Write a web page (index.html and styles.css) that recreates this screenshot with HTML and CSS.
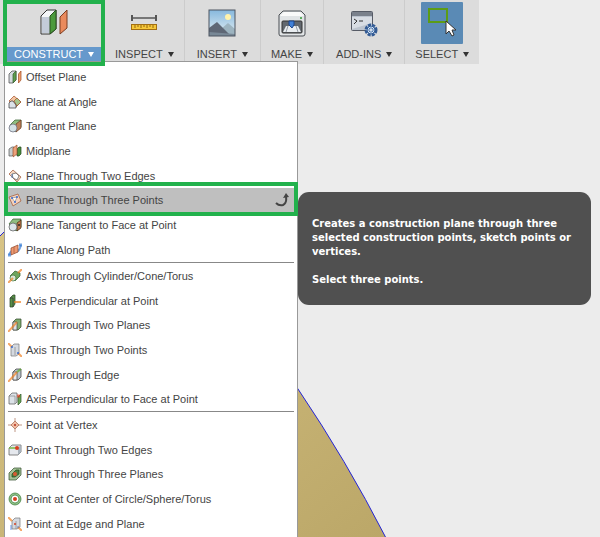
FILE: index.html
```html
<!DOCTYPE html>
<html lang="en">
<head>
    <meta charset="UTF-8">
    <meta name="viewport" content="width=device-width, initial-scale=1.0">
    <title>Construct menu</title>
    <link rel="stylesheet" href="styles.css">
</head>
<body>

    <!-- Model canvas behind the panels -->
    <svg class="model" width="400" height="537" viewBox="0 0 400 537">
        <defs>
            <linearGradient id="sand" x1="0" y1="0" x2="1" y2="1">
                <stop offset="0" stop-color="#d8c486"/>
                <stop offset="1" stop-color="#bba768"/>
            </linearGradient>
        </defs>
        <path d="M-2 238L4 232Q150 170 298 389Q346 460 386 538H-2Z" fill="url(#sand)" stroke="#2424d8"/>
    </svg>

    <!-- Toolbar -->
    <nav class="toolbar">
        <div class="group marked">
            <button type="button" class="tool active">
                <span class="picture">
                    <svg width="28" height="28" viewBox="0 0 28 28">
                        <path d="M1 7L7 1H16V20L10 25H1Z" fill="#f4f6f8" stroke="#333"/>
                        <path d="M2 8H10V24H2Z" fill="#c3cbd8"/>
                        <path d="M10 7L16 1V20L10 25Z" fill="#4c9a3c" stroke="#28501f"/>
                        <path d="M20 8L27 1V19L20 25Z" fill="#ea8a5c" stroke="#7c3c20"/>
                    </svg>
                </span>
                <span class="caption">CONSTRUCT<i class="arrow"></i></span>
            </button>

            <!-- Dropdown -->
            <div class="menu">
                <ul>
                    <li><button type="button"><svg viewBox="0 0 14 14"><path d="M1 4L4 1H8V10L5 13H1Z" fill="#d5dbe0" stroke="#444"/><path d="M5 4L8 1V10L5 13Z" fill="#5e9d4f" stroke="#345c2c"/><path d="M10.500 4L13 1V10L10.500 13Z" fill="#f2a070" stroke="#a04a20"/></svg>Offset Plane</button></li>
                    <li><button type="button"><svg viewBox="0 0 14 14"><path d="M1 6L6 1L13 7L8 12Z" fill="#f4c5a2" stroke="#a35029"/><path d="M6 6L9 3L13 7L9 11Z" fill="#a5c58c" stroke="#a35029"/><path d="M1 8L3 6H5L8 10V13H1Z" fill="#dce2e8" stroke="#333"/></svg>Plane at Angle</button></li>
                    <li><button type="button"><svg viewBox="0 0 14 14"><path d="M2 6L7 1H13V8L7 13Z" fill="#8fbd80" stroke="#315b2a"/><path d="M8 5L13 1V9L8 13Z" fill="#bd825b" stroke="#673b20"/><circle cx="5" cy="9" r="4" fill="#d4e1e6" stroke="#667"/></svg>Tangent Plane</button></li>
                    <li><button type="button"><svg viewBox="0 0 14 14"><path d="M1 5L4 3H6V10L4 12H1Z" fill="#c8ced0" stroke="#555"/><path d="M9 5L11 3H13V10L11 12H9Z" fill="#4b913e" stroke="#24431d"/><path d="M5 4L9 1V10L5 13Z" fill="#eda17a" stroke="#98502c"/></svg>Midplane</button></li>
                    <li><button type="button"><svg viewBox="0 0 14 14"><path d="M1 5L5 1L13 8L9 13Z" fill="#f6d8c3" stroke="#9c5634"/><path d="M4 5L8 4L11 7L9 11L5 9Z" fill="#fff" stroke="#555"/><path d="M4 5V9" stroke="#3375d0"/></svg>Plane Through Two Edges</button></li>
                    <li class="hover"><button type="button"><svg viewBox="0 0 14 14"><path d="M1 4L10 1L13 8L5 13Z" fill="#f4d2bd" stroke="#9c5634"/><path d="M4 5L9 4L7 9Z" fill="#fff" stroke="#888"/><path d="M3 5h2M8 4h2M6 9h2" stroke="#2867d8" stroke-width="2"/></svg>Plane Through Three Points<svg class="turn" viewBox="0 0 14 14"><path d="M1 10Q4 13 8 12Q12 10 11 4" fill="none" stroke="#444" stroke-width="2"/><path d="M8 5L11 0L14 4Z" fill="#444"/></svg></button></li>
                    <li><button type="button"><svg viewBox="0 0 14 14"><path d="M1 6L5 1H13V9L8 13Z" fill="#8fbd80" stroke="#315b2a"/><path d="M9 5L13 2V10L9 13Z" fill="#c27b4f" stroke="#40270f"/><circle cx="5" cy="9" r="4" fill="#dce5ea" stroke="#555"/><path d="M10 7h2" stroke="#222" stroke-width="2"/></svg>Plane Tangent to Face at Point</button></li>
                    <li><button type="button"><svg viewBox="0 0 14 14"><path d="M1 12Q3 6 7 8T13 2" fill="none" stroke="#397ed4" stroke-width="2"/><path d="M3 5L10 2V9L3 12Z" fill="#ed9a73" stroke="#8d4428"/><path d="M6 4V10" stroke="#a35230"/><path d="M0 12h3M11 2h3" stroke="#397ed4" stroke-width="3"/></svg>Plane Along Path</button></li>
                </ul>
                <ul>
                    <li><button type="button"><svg viewBox="0 0 14 14"><path d="M2 7L7 2L12 4V7L7 12Z" fill="#6ea65e" stroke="#315b2a"/><circle cx="5" cy="9" r="3" fill="#dbe7d8" stroke="#3e7434"/><path d="M0 14L5 9M10 4L14 0" stroke="#f08024" stroke-width="2"/></svg>Axis Through Cylinder/Cone/Torus</button></li>
                    <li><button type="button"><svg viewBox="0 0 14 14"><path d="M2 4L5 1H7V10L5 13H2Z" fill="#578f48" stroke="#2c4227"/><path d="M2 4H5V13" fill="none" stroke="#333"/><path d="M6 8H13" stroke="#f08024" stroke-width="2"/></svg>Axis Perpendicular at Point</button></li>
                    <li><button type="button"><svg viewBox="0 0 14 14"><path d="M5 4L8 1H13V9L10 12H5Z" fill="#7fad70" stroke="#2c4227"/><path d="M5 4H9V12H5Z" fill="#dce2e8" stroke="#444"/><path d="M0 14L9 4" stroke="#f08024" stroke-width="2"/></svg>Axis Through Two Planes</button></li>
                    <li><button type="button"><svg viewBox="0 0 14 14"><path d="M3 4L6 1H11V11L8 13H3Z" fill="#d4d9e0" stroke="#777"/><path d="M7 4V12" stroke="#888"/><path d="M0 0L4 4M10 10L14 14" stroke="#f08024" stroke-width="2"/><path d="M3 4h2M9 10h2" stroke="#2867d8" stroke-width="2"/></svg>Axis Through Two Points</button></li>
                    <li><button type="button"><svg viewBox="0 0 14 14"><path d="M5 4L8 1H13V9L10 12H5Z" fill="#b9c3cc" stroke="#333"/><path d="M5 4H9V12H5Z" fill="#e6eaee" stroke="#444"/><path d="M9 4L13 1" stroke="#5eae2c" stroke-width="2"/><path d="M0 14L9 4" stroke="#f08024" stroke-width="2"/></svg>Axis Through Edge</button></li>
                    <li><button type="button"><svg viewBox="0 0 14 14"><path d="M1 4L4 1H9V10L7 12H1Z" fill="#dce2e8" stroke="#555"/><path d="M1 4H7V12" fill="none" stroke="#888"/><path d="M10 5L13 2V10L10 13Z" fill="#69a657" stroke="#31572a"/><path d="M9 4h3" stroke="#d83f20" stroke-width="3"/></svg>Axis Perpendicular to Face at Point</button></li>
                </ul>
                <ul>
                    <li><button type="button"><svg viewBox="0 0 14 14"><path d="M7 0V14M0 7H14" stroke="#a76c52"/><path d="M7 3L11 7L7 11L3 7Z" fill="#f0bda4" stroke="#a76c52"/><circle cx="7" cy="7" r="1" fill="#b3311c"/></svg>Point at Vertex</button></li>
                    <li><button type="button"><svg viewBox="0 0 14 14"><path d="M1 5L4 2H13V9L10 12H1Z" fill="#e5e8ed" stroke="#555"/><path d="M10 5L13 2V9L10 12Z" fill="#a8b2bc"/><path d="M1 5H9" stroke="#6fb536" stroke-width="2"/><circle cx="9" cy="5" r="2" fill="#d83f20"/></svg>Point Through Two Edges</button></li>
                    <li><button type="button"><svg viewBox="0 0 14 14"><path d="M1 6L6 1H13V8L8 13H1Z" fill="#a3c297" stroke="#344d2e"/><path d="M4 7L8 3H11V7L7 10H4Z" fill="#4b7f3e" stroke="#254a20"/><circle cx="7" cy="7" r="2" fill="#d85a32"/></svg>Point Through Three Planes</button></li>
                    <li><button type="button"><svg viewBox="0 0 14 14"><circle cx="7" cy="7" r="6" fill="#8fc087" stroke="#397a37"/><circle cx="7" cy="7" r="4" fill="#fff" stroke="#397a37"/><circle cx="7" cy="7" r="2" fill="#d83f20"/></svg>Point at Center of Circle/Sphere/Torus</button></li>
                    <li><button type="button"><svg viewBox="0 0 14 14"><path d="M4 4L7 1H12V10L9 12H4Z" fill="#d4d9e0" stroke="#777"/><path d="M8 4V12" stroke="#888"/><path d="M0 0L4 4M10 10L14 14" stroke="#f08024" stroke-width="2"/><path d="M3 13V8M9 10h2" stroke="#2867d8"/><circle cx="7" cy="7" r="1" fill="#d83f20"/></svg>Point at Edge and Plane</button></li>
                </ul>

                <div class="tooltip" role="tooltip">
                    <p>Creates a construction plane through three selected construction points, sketch points or vertices.</p>
                    <p>Select three points.</p>
                </div>
            </div>
        </div>

        <div class="group">
            <button type="button" class="tool">
                <span class="picture">
                    <svg width="28" height="28" viewBox="0 0 28 28">
                        <path d="M2 9H26" stroke="#777" stroke-width="2"/>
                        <path d="M2 6V12M26 6V12" stroke="#555" stroke-width="2"/>
                        <rect x="1.500" y="15.500" width="25" height="5" fill="#f6c83a" stroke="#a36f12"/>
                        <path d="M5 16v3M8 16v2M11 16v3M14 16v2M17 16v3M20 16v2M23 16v3" stroke="#94660f"/>
                    </svg>
                </span>
                <span class="caption">INSPECT<i class="arrow"></i></span>
            </button>
        </div>

        <div class="group">
            <button type="button" class="tool">
                <span class="picture">
                    <svg width="28" height="28" viewBox="0 0 28 28">
                        <defs>
                            <linearGradient id="sky" x1="0" y1="0" x2="0" y2="1">
                                <stop offset="0" stop-color="#86b8dd"/>
                                <stop offset="1" stop-color="#e6f0f4"/>
                            </linearGradient>
                        </defs>
                        <rect x="1" y="1" width="26" height="26" fill="url(#sky)"/>
                        <path d="M13 20L20 14L27 20V27H13Z" fill="#9db4c0"/>
                        <path d="M1 19L9 13L22 26H1Z" fill="#5e6775"/>
                        <path d="M1 23L27 25V27H1Z" fill="#788896"/>
                        <circle cx="20" cy="8" r="3" fill="#fff3ab"/>
                        <rect x="1" y="1" width="26" height="26" fill="none" stroke="#4c5560"/>
                    </svg>
                </span>
                <span class="caption">INSERT<i class="arrow"></i></span>
            </button>
        </div>

        <div class="group">
            <button type="button" class="tool">
                <span class="picture">
                    <svg width="28" height="28" viewBox="0 0 28 28">
                        <path d="M1 6L5 2H23L27 6V25Q27 27 25 27H3Q1 27 1 25Z" fill="#e1e4e6" stroke="#4b4f54"/>
                        <path d="M2 7L6 3H22L26 7Z" fill="#fafafa"/>
                        <rect x="4" y="12" width="20" height="12" rx="1" fill="#62686f" stroke="#333"/>
                        <path d="M8 17H20L23 23H5Z" fill="#e9edf0"/>
                        <path d="M10 17L8 23M18 17L20 23" stroke="#969da5"/>
                        <path d="M11 12H16V16L14 19L11 16Z" fill="#4181d8" stroke="#1d478c"/>
                        <circle cx="23" cy="9" r="1" fill="#2f9c32"/>
                    </svg>
                </span>
                <span class="caption">MAKE<i class="arrow"></i></span>
            </button>
        </div>

        <div class="group">
            <button type="button" class="tool">
                <span class="picture">
                    <svg width="28" height="28" viewBox="0 0 28 28">
                        <rect x="1.500" y="2.500" width="21" height="19" rx="1" fill="#bcc4cf" stroke="#565b66"/>
                        <rect x="2" y="3" width="20" height="4" fill="#7a818c"/>
                        <path d="M2 8H22V14L2 20Z" fill="#d8dde4"/>
                        <path d="M4 10L7 12L4 15M9 12H13" fill="none" stroke="#333"/>
                        <circle cx="21" cy="21" r="5" fill="#dae7f5" stroke="#325a94" stroke-width="3" stroke-dasharray="3 1"/>
                        <circle cx="21" cy="21" r="4" fill="#dae7f5" stroke="#325a94"/>
                        <path d="M21 17V25M17 21H25M18 18L24 24M24 18L18 24" stroke="#4d76ac"/>
                        <circle cx="21" cy="21" r="1" fill="#fff"/>
                    </svg>
                </span>
                <span class="caption">ADD-INS<i class="arrow"></i></span>
            </button>
        </div>

        <div class="group">
            <button type="button" class="tool">
                <span class="picture selected">
                    <svg width="42" height="42" viewBox="0 0 42 42">
                        <rect x="8" y="7" width="18" height="13" fill="none" stroke="#5c9c16" stroke-width="2"/>
                        <path d="M25 19V32L28 29L31 34L33 33L31 28H35Z" fill="#fff" stroke="#333"/>
                    </svg>
                </span>
                <span class="caption">SELECT<i class="arrow"></i></span>
            </button>
        </div>
    </nav>

</body>
</html>
```
FILE: styles.css
```css
body {
    margin: 0;
    min-height: 100vh;
    overflow: hidden;
    background-color: #ececec;
    font-family: "Liberation Sans", Arial, sans-serif;
    font-size: 11px;
    color: #444;
}

.model {
    position: absolute;
    top: 0;
    left: 0;
}

button {
    border: none;
    background: none;
    font: inherit;
    color: inherit;
    cursor: pointer;
}

/* Toolbar */
.toolbar {
    position: relative;
    display: flex;
    width: max-content;
    height: 64px;
    padding-left: 7px;
    background-color: #dcdcdc;
}

.group {
    position: relative;
    padding: 2px 0;
}

.group + .group {
    border-right: 1px solid #ccc;
}

.group:last-child {
    border-right: none;
}

.marked {
    margin-right: 4px;
    z-index: 1;
}

.marked::after {
    content: "";
    position: absolute;
    inset: 0 -4px -2px;
    border: 4px solid #22b14c;
    pointer-events: none;
}

.tool {
    display: flex;
    flex-direction: column;
    align-items: center;
    padding: 0;
}

.picture {
    display: flex;
    align-items: center;
    justify-content: center;
    width: 42px;
    height: 42px;
}

.selected {
    background-color: #5a8ab5;
    border-radius: 1px;
}

.caption {
    display: flex;
    align-items: center;
    gap: 5px;
    margin-top: 3px;
    padding: 0 12px;
    line-height: 15px;
}

.group:nth-child(even) .caption {
    padding: 0 10px;
}

.active .caption {
    padding: 0 7px;
    background-color: #6699cc;
    color: #fff;
}

.arrow {
    border: 3px solid transparent;
    border-top: 5px solid #333;
    border-bottom: none;
}

.active .arrow {
    border-top-color: #fff;
}

/* Dropdown */
.menu {
    position: absolute;
    top: 61px;
    left: -3px;
    width: 286px;
    padding: 2px 3px;
    border: 1px solid #999;
    background-color: #fff;
}

.menu ul {
    margin: 0;
    padding: 0;
    list-style: none;
}

.menu ul + ul {
    border-top: 1px solid #888;
}

.menu li {
    position: relative;
    height: 25px;
}

.menu li:nth-child(3n) {
    height: 24px;
}

.menu li button {
    display: flex;
    align-items: center;
    gap: 4px;
    width: 100%;
    height: 100%;
    padding: 0;
    text-align: left;
}

.menu svg {
    width: 14px;
    height: 14px;
    stroke-opacity: 0.7;
}

.hover {
    background-color: #bfbfbf;
}

.hover::after {
    content: "";
    position: absolute;
    inset: -6px -4px -4px;
    border: 4px solid #22b14c;
    pointer-events: none;
}

.menu .turn {
    margin: 0 5px 0 auto;
    stroke-opacity: 1;
}

/* Tooltip */
.tooltip {
    position: absolute;
    top: 130px;
    left: 293px;
    width: 265px;
    padding: 25px 14px 18px;
    border-radius: 11px;
    background-color: #505050;
    color: #fff;
    font: bold 10px/14px "DejaVu Sans", Verdana, sans-serif;
}

.tooltip p {
    margin: 0 0 14px;
}

.tooltip p:last-child {
    margin-bottom: 0;
}
```
